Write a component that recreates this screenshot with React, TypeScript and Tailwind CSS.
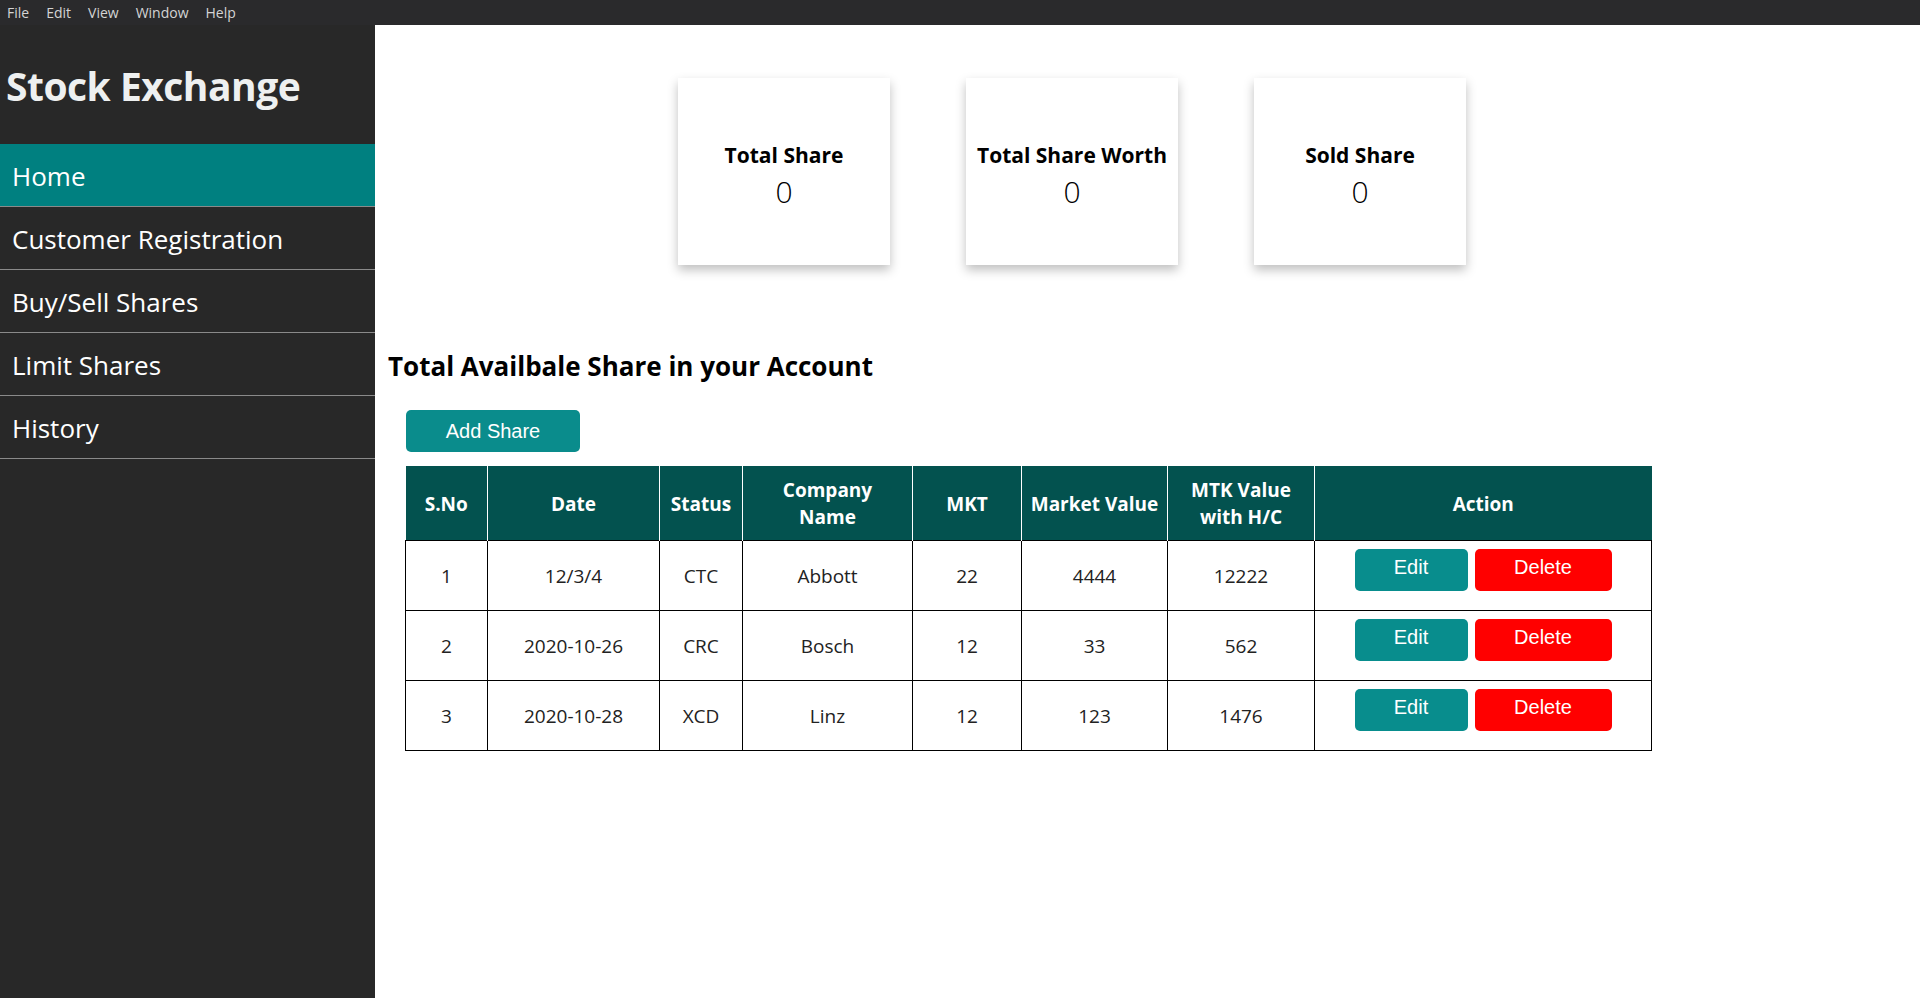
const rows = [
  { sno: 1, date: "12/3/4", status: "CTC", company: "Abbott", mkt: 22, value: 4444, mtk: 12222 },
  { sno: 2, date: "2020-10-26", status: "CRC", company: "Bosch", mkt: 12, value: 33, mtk: 562 },
  { sno: 3, date: "2020-10-28", status: "XCD", company: "Linz", mkt: 12, value: 123, mtk: 1476 },
];

const navItems = ["Home", "Customer Registration", "Buy/Sell Shares", "Limit Shares", "History"];

const cards = [
  { title: "Total Share", value: 0 },
  { title: "Total Share Worth", value: 0 },
  { title: "Sold Share", value: 0 },
];

const App = () => {
  return (
    <div className="h-screen flex flex-col font-['Open_Sans',sans-serif] overflow-hidden">
      {/* window menu */}
      <div className="h-[25px] bg-[#2a2a2c] flex items-center gap-[17px] px-[7px] text-[14px] text-[#d4d4d4] shrink-0">
        <span>File</span>
        <span>Edit</span>
        <span>View</span>
        <span>Window</span>
        <span>Help</span>
      </div>

      <div className="flex flex-1">
        <aside className="w-[375px] bg-[#282828] shrink-0">
          <div className="h-[119px] flex items-center px-[6px] pt-[4px]">
            <h1 className="text-[#eef0f0] font-bold text-[39px] tracking-[-0.5px]">Stock Exchange</h1>
          </div>
          <nav>
            {navItems.map((item, i) => (
              <div
                key={item}
                className={
                  i === 0
                    ? "h-[63px] flex items-center pl-[12px] pt-[3px] text-[26px] text-white bg-[#008080] border-b border-[#8a8a8a]"
                    : "h-[63px] flex items-center pl-[12px] pt-[3px] text-[26px] text-white border-b border-[#8a8a8a]"
                }
              >
                {item}
              </div>
            ))}
          </nav>
        </aside>

        <main className="flex-1 bg-white pt-[53px]">
          <div className="flex gap-[76px] pl-[303px]">
            {cards.map((c) => (
              <div
                key={c.title}
                className="w-[212px] h-[187px] bg-white shadow-[0_5px_10px_rgba(0,0,0,0.25)] flex flex-col items-center justify-center pt-[12px]"
              >
                <span className="font-bold text-[21px] text-black leading-[28px]">{c.title}</span>
                <span className="text-[30px] text-black font-light leading-[46px]">{c.value}</span>
              </div>
            ))}
          </div>

          <h2 className="mt-[83px] pl-[13px] font-bold text-[26px] leading-[36px] text-black">
            Total Availbale Share in your Account
          </h2>

          <div className="pl-[31px] mt-[26px]">
            <button className="w-[174px] h-[42px] rounded-[5px] bg-[#0a8c8c] text-white text-[20px] font-['Liberation_Sans',Arial,sans-serif]">
              Add Share
            </button>
          </div>

          <div className="pl-[30px] mt-[14px]">
            <table className="border-collapse w-[1246px] table-fixed text-center">
              <colgroup>
                <col className="w-[82px]" />
                <col className="w-[172px]" />
                <col className="w-[83px]" />
                <col className="w-[170px]" />
                <col className="w-[109px]" />
                <col className="w-[146px]" />
                <col className="w-[147px]" />
                <col className="w-[337px]" />
              </colgroup>
              <thead>
                <tr className="h-[74px] bg-[#03524f] text-white text-[19px] font-bold leading-[27px]">
                  <th className="border-r border-white pt-[3px]">S.No</th>
                  <th className="border-r border-white pt-[3px]">Date</th>
                  <th className="border-r border-white pt-[3px]">Status</th>
                  <th className="border-r border-white px-[28px] pt-[3px]">Company Name</th>
                  <th className="border-r border-white pt-[3px]">MKT</th>
                  <th className="border-r border-white pt-[3px]">Market Value</th>
                  <th className="border-r border-white px-3 pt-[3px]">MTK Value with H/C</th>
                  <th className="pt-[3px]">Action</th>
                </tr>
              </thead>
              <tbody className="text-[19px] text-[#222]">
                {rows.map((r) => (
                  <tr key={r.sno} className="h-[70px]">
                    <td className="border border-black pt-[2px]">{r.sno}</td>
                    <td className="border border-black pt-[2px]">{r.date}</td>
                    <td className="border border-black pt-[2px]">{r.status}</td>
                    <td className="border border-black pt-[2px]">{r.company}</td>
                    <td className="border border-black pt-[2px]">{r.mkt}</td>
                    <td className="border border-black pt-[2px]">{r.value}</td>
                    <td className="border border-black pt-[2px]">{r.mtk}</td>
                    <td className="border border-black align-top pt-[8px]">
                      <div className="flex justify-center gap-[7px] font-['Liberation_Sans',Arial,sans-serif] text-[20px] text-white">
                        <button className="w-[113px] h-[42px] rounded-[5px] bg-[#088d8d] pb-[6px]">Edit</button>
                        <button className="w-[137px] h-[42px] rounded-[5px] bg-[#ff0000] pb-[6px]">Delete</button>
                      </div>
                    </td>
                  </tr>
                ))}
              </tbody>
            </table>
          </div>
        </main>
      </div>
    </div>
  );
};

export default App;
